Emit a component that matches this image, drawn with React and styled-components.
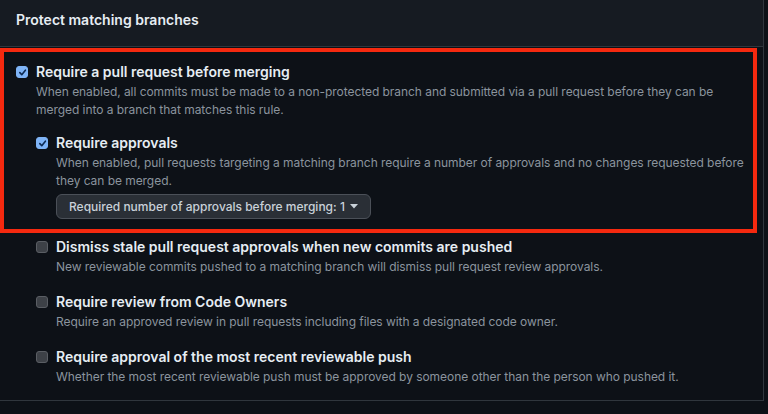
import React from "react";
import styled, { createGlobalStyle } from "styled-components";

const Global = createGlobalStyle`
  html, body { margin: 0; padding: 0; background: #0d1117; }
  body { font-family: Inter, "Noto Sans", "Liberation Sans", sans-serif; -webkit-font-smoothing: antialiased; }
  * { box-sizing: border-box; }
`;

const Page = styled.div`
  position: relative;
  width: 768px;
  height: 414px;
  overflow: hidden;
  background: #0d1117;
`;

const Panel = styled.section`
  width: 764px;
  border-right: 1px solid #30363d;
  border-bottom: 1px solid #30363d;
  background: #0d1117;
`;

const Header = styled.h3`
  margin: 0;
  height: 47px;
  padding: 10px 16px 0;
  background: #161b22;
  border-bottom: 1px solid #30363d;
  color: #e6edf3;
  font-size: 14px;
  line-height: 20px;
  font-weight: 600;
`;

const Body = styled.div`
  padding: 15px 16px 14px;
`;

const Option = styled.div`
  display: grid;
  grid-template-columns: 12px 1fr;
  column-gap: 8px;
  margin-left: ${(p) => (p.$nested ? "20px" : "0")};
`;

const Box = styled.span`
  width: 12px;
  height: 12px;
  margin-top: 4px;
  border-radius: 3px;
  display: flex;
  align-items: center;
  justify-content: center;
  background: ${(p) => (p.$checked ? "#7fb4f6" : "#3d4147")};
  border: 1px solid ${(p) => (p.$checked ? "#7fb4f6" : "#5a5e64")};
`;

const Title = styled.div`
  color: #e6edf3;
  font-size: 14px;
  line-height: 20px;
  font-weight: 600;
`;

const Desc = styled.div`
  margin-top: 1px;
  color: #8b949e;
  font-size: 12px;
  line-height: 18px;
  letter-spacing: -0.05px;
  white-space: nowrap;
`;

const Children = styled.div`
  grid-column: 1 / -1;
  display: flex;
  flex-direction: column;
  gap: 16px;
  margin-top: 14px;
`;

const Select = styled.button`
  margin-top: 4px;
  margin-bottom: 2px;
  height: 25px;
  padding: 0 12px;
  display: inline-flex;
  align-items: center;
  gap: 5px;
  background: #2a2f36;
  border: 1px solid #4b5058;
  border-radius: 6px;
  color: #c9d1d9;
  font-family: inherit;
  font-size: 12px;
  font-weight: 500;
  cursor: pointer;
`;

const Highlight = styled.div`
  position: absolute;
  left: 0;
  top: 48px;
  width: 757px;
  height: 185px;
  border: 4px solid #f5290f;
  pointer-events: none;
`;

const Check = () => (
  <svg width="9" height="9" viewBox="0 0 10 10">
    <path d="M2 5.2 L4.2 7.4 L8.2 2.4" fill="none" stroke="#0d2a52" strokeWidth="1.8" strokeLinecap="round" strokeLinejoin="round" />
  </svg>
);

const Caret = () => (
  <svg width="8" height="5" viewBox="0 0 8 5">
    <path d="M0 0 H8 L4 4.5 Z" fill="#c9d1d9" />
  </svg>
);

function CheckOption({ checked, nested, title, desc, children }) {
  return (
    <Option $nested={nested}>
      <Box $checked={checked}>{checked && <Check />}</Box>
      <div>
        <Title>{title}</Title>
        <Desc>{desc}</Desc>
        {children}
      </div>
    </Option>
  );
}

const subOptions = [
  {
    title: "Dismiss stale pull request approvals when new commits are pushed",
    desc: "New reviewable commits pushed to a matching branch will dismiss pull request review approvals.",
  },
  {
    title: "Require review from Code Owners",
    desc: "Require an approved review in pull requests including files with a designated code owner.",
  },
  {
    title: "Require approval of the most recent reviewable push",
    desc: "Whether the most recent reviewable push must be approved by someone other than the person who pushed it.",
  },
];

export default function App() {
  return (
    <Page>
      <Global />
      <Panel>
        <Header>Protect matching branches</Header>
        <Body>
          <Option>
            <Box $checked>
              <Check />
            </Box>
            <div>
              <Title>Require a pull request before merging</Title>
              <Desc>
                When enabled, all commits must be made to a non-protected branch and submitted via a pull request before they can be
                <br />
                merged into a branch that matches this rule.
              </Desc>
            </div>
            <Children>
              <CheckOption
                checked
                nested
                title="Require approvals"
                desc={
                  <>
                    When enabled, pull requests targeting a matching branch require a number of approvals and no changes requested before
                    <br />
                    they can be merged.
                  </>
                }
              >
                <Select>
                  Required number of approvals before merging: 1 <Caret />
                </Select>
              </CheckOption>
              {subOptions.map((o) => (
                <CheckOption key={o.title} nested title={o.title} desc={o.desc} />
              ))}
            </Children>
          </Option>
        </Body>
      </Panel>
      <Highlight />
    </Page>
  );
}
